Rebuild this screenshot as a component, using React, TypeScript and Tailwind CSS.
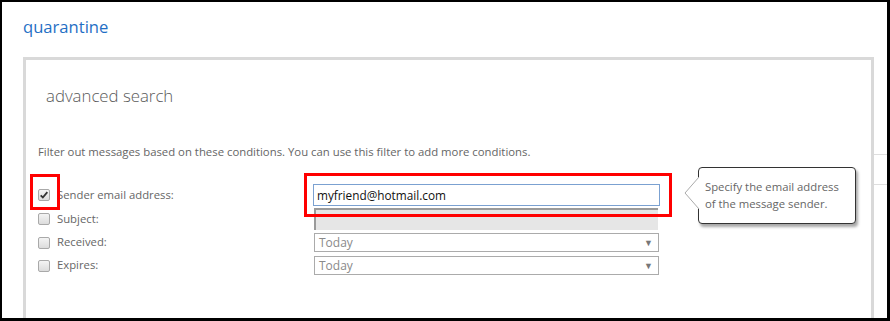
import { useState } from "react";

const font = { fontFamily: '"Open Sans", "Noto Sans", sans-serif' };

const Check = ({ checked }: { checked?: boolean }) => (
  <span className="flex h-[12px] w-[12px] shrink-0 items-center justify-center rounded-[2px] border border-[#a9a9a9] bg-gradient-to-b from-[#f4f4f4] to-[#dcdcdc]">
    {checked && (
      <svg viewBox="0 0 12 12" className="h-[10px] w-[10px]">
        <path d="M2 6.5 L4.6 9 L10 2.5" fill="none" stroke="#333" strokeWidth="2.2" />
      </svg>
    )}
  </span>
);

const Select = ({ value }: { value: string }) => (
  <div className="flex h-[19px] w-[345px] items-center justify-between border border-[#ababab] bg-white pl-[4px] pr-[5px]">
    <span className="text-[12px] text-[#8a8a8a]">{value}</span>
    <span className="text-[9px] text-[#777]">▼</span>
  </div>
);

export default function App() {
  const [email, setEmail] = useState("myfriend@hotmail.com");

  const rows = [
    { label: "Sender email address:", checked: true },
    { label: "Subject:" },
    { label: "Received:" },
    { label: "Expires:" },
  ];

  return (
    <div
      style={font}
      className="relative h-[321px] w-[890px] overflow-hidden border-b-[3px] border-l-2 border-r-[3px] border-t-2 border-black bg-white"
    >
      <div className="pl-[21px] pt-[14px] text-[16.6px] leading-[22px] text-[#1f6fc5]">quarantine</div>

      <div className="mt-[19px] flex">
        <div className="ml-[21px] h-[270px] w-[851px] shrink-0 border-l-[3px] border-r-[3px] border-t-[3px] border-[#d9d9d9] pl-[12px]">
          <div className="ml-[8px] pt-[25px] text-[16.8px] font-light leading-[22px] text-[#5a5a5a]">
            advanced search
          </div>
          <div className="mt-[37px] text-[11.35px] leading-[16px] text-[#666]">
            Filter out messages based on these conditions. You can use this filter to add more conditions.
          </div>

          <div className="mt-[23px] flex flex-col">
            <div className="flex h-[24px] items-center">
              <div className="flex w-[275px] items-center gap-[7px]">
                <Check checked />
                <span className="text-[11.3px] text-[#666]">{rows[0].label}</span>
              </div>
              <input
                value={email}
                onChange={(e) => setEmail(e.target.value)}
                className="h-[22px] w-[347px] border border-[#7ba1d1] bg-white px-[3px] text-[11.8px] text-[#111] outline-none"
              />
            </div>
            <div className="flex h-[24px] items-center">
              <div className="flex w-[276px] items-center gap-[7px]">
                <Check />
                <span className="text-[11.3px] text-[#666]">{rows[1].label}</span>
              </div>
              <div className="h-[22px] w-[344px] border-l-2 border-t-2 border-[#9a9a9a] bg-[#e6e6e6]" />
            </div>
            <div className="flex h-[23px] items-center">
              <div className="flex w-[276px] items-center gap-[7px]">
                <Check />
                <span className="text-[11.3px] text-[#666]">{rows[2].label}</span>
              </div>
              <Select value="Today" />
            </div>
            <div className="flex h-[23px] items-center">
              <div className="flex w-[276px] items-center gap-[7px]">
                <Check />
                <span className="text-[11.3px] text-[#666]">{rows[3].label}</span>
              </div>
              <Select value="Today" />
            </div>
          </div>
        </div>
        <div className="flex-1">
          <div className="mt-[97px] h-px bg-[#dedede]" />
          <div className="mt-[29px] h-px bg-[#dedede]" />
        </div>
      </div>

      {/* tooltip */}
      <div className="absolute left-[696px] top-[165px] h-[57px] w-[158px] rounded-[4px] border border-[#333] bg-white pl-[6px] pt-[10px] text-[11.3px] leading-[17px] text-[#666] shadow-[2px_3px_3px_rgba(0,0,0,0.35)]">
        <svg className="absolute left-[-15px] top-[9px]" width="16" height="32" viewBox="0 0 16 32">
          <path d="M15 0 L1 16 L15 32" fill="white" stroke="#aaa" strokeWidth="1" />
        </svg>
        Specify the email address
        <br />
        of the message sender.
      </div>

      {/* annotation boxes */}
      <div className="absolute left-[28px] top-[172px] h-[36px] w-[30px] border-[3px] border-[#ff0000]" />
      <div className="absolute left-[302px] top-[171px] h-[44px] w-[368px] border-[3px] border-[#ff0000]" />
    </div>
  );
}
